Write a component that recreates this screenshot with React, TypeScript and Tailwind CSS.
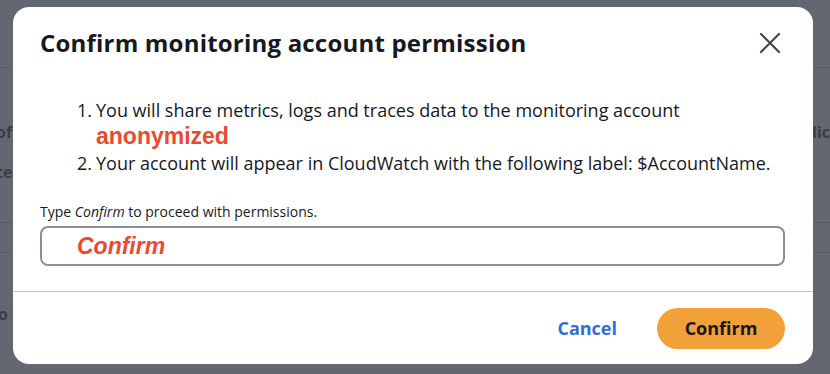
export default function App() {
  return (
    <div
      className="relative w-[830px] h-[374px] overflow-hidden bg-[#636772]"
      style={{ fontFamily: '"Open Sans", "Noto Sans", Arial, sans-serif' }}
    >
      {/* page behind the overlay */}
      <div className="absolute inset-0 text-[#3a3e48] text-[16px] font-bold">
        <div className="absolute left-0 right-0 top-[67px] h-px bg-[#555a64]" />
        <div className="absolute left-0 right-0 top-[222px] h-px bg-[#555a64]" />
        <div className="absolute left-0 right-0 top-[252px] h-px bg-[#555a64]" />
        <span className="absolute left-[-4px] top-[120px]">of</span>
        <span className="absolute left-[-4px] top-[160px]">te</span>
        <span className="absolute left-[-2px] top-[302px]">o</span>
        <span className="absolute left-[812px] top-[120px]">lic</span>
      </div>

      <div className="relative pl-[13px] pt-[7px]">
        <div className="w-[800px] h-[357px] bg-white rounded-[16px] flex flex-col">
          <div className="flex items-start justify-between pl-[27px] pr-[32px] pt-[21px]">
            <h1 className="text-[24px] leading-[30px] font-bold text-[#16191f] tracking-[0.2px]">
              Confirm monitoring account permission
            </h1>
            <button className="mt-[4px] text-[#414750]">
              <svg width="22" height="22" viewBox="0 0 22 22" fill="none">
                <path d="M2 2L20 20M20 2L2 20" stroke="currentColor" strokeWidth="2.2" strokeLinecap="round" />
              </svg>
            </button>
          </div>

          <div className="pl-[27px] pr-[27px] pt-[40px] text-[18px] leading-[24px] text-[#16191f]">
            <ol className="pl-[37px]">
              <li className="flex">
                <span className="w-[19px]">1.</span>
                <div>
                  <div>You will share metrics, logs and traces data to the monitoring account</div>
                  <div
                    className="text-[23px] leading-[28px] font-bold text-[#ea4a2e]"
                    style={{ fontFamily: '"Liberation Sans", Arial, sans-serif' }}
                  >
                    anonymized
                  </div>
                </div>
              </li>
              <li className="flex mt-[1px]">
                <span className="w-[19px]">2.</span>
                <div>Your account will appear in CloudWatch with the following label: $AccountName.</div>
              </li>
            </ol>

            <p className="mt-[27px] text-[14px] leading-[20px]">
              Type <i>Confirm</i> to proceed with permissions.
            </p>
            <div className="mt-[4px] mr-[1px] h-[40px] border-2 border-[#8c8f96] rounded-[8px] flex items-center pl-[35px]">
              <span
                className="text-[23px] font-bold italic text-[#ea4a2e]"
                style={{ fontFamily: '"Liberation Sans", Arial, sans-serif' }}
              >
                Confirm
              </span>
            </div>
          </div>

          <div className="mt-auto border-t border-[#c6c6cd]">
            <div className="flex items-center justify-end gap-[40px] pr-[28px] pt-[16px] pb-[15px]">
              <button className="text-[18px] font-bold text-[#2e6fd9]">Cancel</button>
              <button className="w-[128px] h-[41px] rounded-full bg-[#f2a03a] text-[18px] font-bold text-[#16191f]">
                Confirm
              </button>
            </div>
          </div>
        </div>
      </div>
    </div>
  )
}
